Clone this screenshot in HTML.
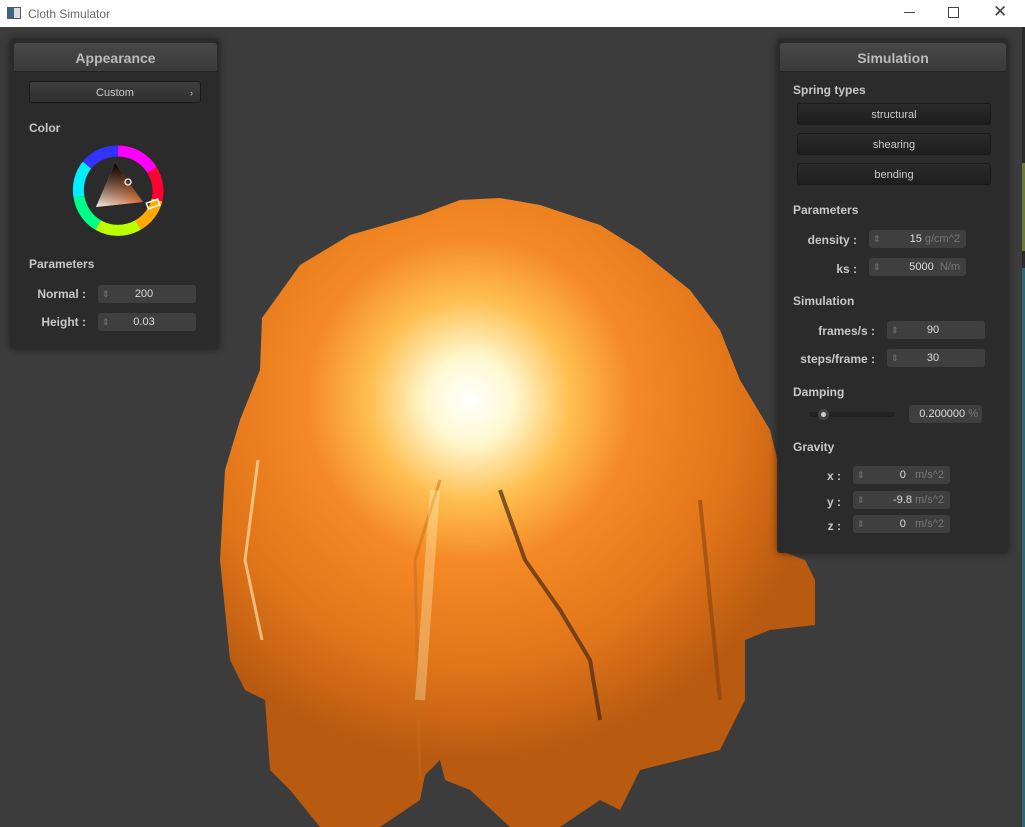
<!DOCTYPE html>
<html><head><style>
*{margin:0;padding:0;box-sizing:border-box}
body{width:1025px;height:827px;background:#3c3c3c;font-family:"Liberation Sans",sans-serif;position:relative;overflow:hidden}
.title{position:absolute;left:0;top:0;width:1025px;height:27px;background:#fff;font-size:12px;color:#666}
.panel{position:absolute;background:rgba(43,43,43,0.96);box-shadow:0 0 8px rgba(0,0,0,.5);border-radius:3px}
.hdr{position:absolute;height:29px;background:linear-gradient(#484848,#3a3a3a);border-bottom:1px solid #222;color:#bbb;font-weight:bold;font-size:14px;text-align:center;line-height:30px;border-radius:3px 3px 0 0}
.lbl{position:absolute;color:#c8c8c8;font-weight:bold;font-size:12px}
.rl{position:absolute;color:#c8c8c8;font-weight:bold;font-size:12px;text-align:right}
.box{position:absolute;height:18px;background:#3f3f3f;border-radius:3px;color:#ddd;font-size:11px;line-height:19px;text-align:right;padding-right:6px}
.box:before{content:"⇕";position:absolute;left:4px;color:#777;font-size:9px}
.u{color:#777}
.btn{position:absolute;height:22px;background:linear-gradient(#2a2a2a,#1e1e1e);border:1px solid #1a1a1a;border-radius:3px;color:#ccc;font-size:11px;text-align:center;line-height:23px}
</style></head><body>
<div class="title">
 <div style="position:absolute;left:7px;top:7px;width:14px;height:12px;border:1px solid #557;background:linear-gradient(90deg,#3a6a7a 50%,#ddd 50%)"></div>
 <div style="position:absolute;left:28px;top:7px">Cloth Simulator</div>
 <div style="position:absolute;left:904px;top:12px;width:11px;height:1px;background:#444"></div>
 <div style="position:absolute;left:948px;top:7px;width:11px;height:11px;border:1px solid #444"></div>
 <div style="position:absolute;left:993px;top:2px;font-size:17px;color:#444">✕</div>
</div>
<div style="position:absolute;left:1022px;top:27px;width:3px;height:800px;background:#2a2a2a"></div>
<div style="position:absolute;left:1022px;top:163px;width:3px;height:88px;background:#6a7a3a"></div>
<div style="position:absolute;left:1022px;top:268px;width:3px;height:559px;background:#2a6a74"></div>

<svg style="position:absolute;left:0;top:0" width="1025" height="827">
<defs>
<radialGradient id="g" cx="470" cy="400" r="360" gradientUnits="userSpaceOnUse">
<stop offset="0" stop-color="#ffffff"/><stop offset="0.12" stop-color="#fff8d0"/><stop offset="0.28" stop-color="#ffbf50"/><stop offset="0.45" stop-color="#f58a25"/><stop offset="0.75" stop-color="#e0741a"/><stop offset="1" stop-color="#b85a10"/></radialGradient>
</defs>
<path fill="url(#g)" d="M262,318 L300,265 L350,235 L420,215 L460,200 L500,198 L540,205 L600,225 L640,250 L690,290 L720,330 L740,380 L770,430 L780,470 L778,550 L805,560 L815,580 L815,625 L770,630 L745,640 L745,700 L720,750 L680,760 L640,770 L620,810 L600,800 L560,827 L510,827 L470,790 L445,780 L440,760 L425,775 L420,800 L380,827 L320,827 L290,790 L270,770 L265,700 L245,690 L230,660 L220,560 L225,470 L240,420 L260,370 Z"/>
<path d="M440,480 L415,560 L420,780" stroke="#c86a1a" stroke-width="3" fill="none" opacity=".5"/>
<path d="M435,490 L420,700" stroke="#fff4c0" stroke-width="10" fill="none" opacity=".35"/>
<path d="M500,490 L525,560 L560,610 L590,660 L600,720" stroke="#4a2a12" stroke-width="4" fill="none" opacity=".7"/>
<path d="M700,500 L710,600 L720,700" stroke="#7a3a10" stroke-width="4" fill="none" opacity=".5"/>
<path d="M258,460 L245,560 L262,640" stroke="#fff0c0" stroke-width="3" fill="none" opacity=".6"/>
</svg>

<div class="panel" style="left:10px;top:39px;width:209px;height:310px">
 <div class="hdr" style="left:4px;top:4px;width:203px">Appearance</div>
 <div class="btn" style="left:19px;top:42px;width:172px;background:linear-gradient(#3e3e3e,#303030)">Custom<span style="position:absolute;right:7px;top:0;font-size:9px">›</span></div>
 <div class="lbl" style="left:19px;top:82px">Color</div>
 <svg style="position:absolute;left:62px;top:106px" width="92" height="92" viewBox="0 0 92 92">
  <defs>
   <linearGradient id="t1" x1="43" y1="18" x2="48" y2="62" gradientUnits="userSpaceOnUse"><stop offset="0" stop-color="#000"/><stop offset="1" stop-color="#000" stop-opacity="0"/></linearGradient>
   <linearGradient id="t2" x1="24" y1="62" x2="62" y2="40" gradientUnits="userSpaceOnUse"><stop offset="0" stop-color="#fff"/><stop offset="1" stop-color="#fff" stop-opacity="0"/></linearGradient>
  </defs>
  <g fill="none" stroke-width="11">
   <path d="M46,6 A40,40 0 0 1 80,25" stroke="#f0f"/>
   <path d="M80,25 A40,40 0 0 1 85,55" stroke="#f03"/>
   <path d="M85,55 A40,40 0 0 1 66,80" stroke="#fa0"/>
   <path d="M66,80 A40,40 0 0 1 26,80" stroke="#bf0"/>
   <path d="M26,80 A40,40 0 0 1 7,52" stroke="#0f8"/>
   <path d="M7,52 A40,40 0 0 1 15,20" stroke="#0ef"/>
   <path d="M15,20 A40,40 0 0 1 46,6" stroke="#33f"/>
  </g>
  <path d="M43,18 L71,57 L24,62 Z" fill="#e07030"/>
  <path d="M43,18 L71,57 L24,62 Z" fill="url(#t2)"/>
  <path d="M43,18 L71,57 L24,62 Z" fill="url(#t1)"/>
  <circle cx="56" cy="37" r="3" fill="none" stroke="#fff" stroke-width="1.3"/>
  <rect x="75" y="56" width="12" height="6" fill="none" stroke="#fff" stroke-width="1.5" transform="rotate(-20 81 59)"/>
 </svg>
 <div class="lbl" style="left:19px;top:218px">Parameters</div>
 <div class="rl" style="left:10px;top:248px;width:66px">Normal :</div>
 <div class="box" style="left:88px;top:246px;width:98px;text-align:center">200</div>
 <div class="rl" style="left:10px;top:276px;width:66px">Height :</div>
 <div class="box" style="left:88px;top:274px;width:98px;text-align:center">0.03</div>
</div>

<div class="panel" style="left:777px;top:39px;width:231px;height:514px">
 <div class="hdr" style="left:3px;top:4px;width:226px">Simulation</div>
 <div class="lbl" style="left:16px;top:44px">Spring types</div>
 <div class="btn" style="left:20px;top:64px;width:194px">structural</div>
 <div class="btn" style="left:20px;top:94px;width:194px">shearing</div>
 <div class="btn" style="left:20px;top:124px;width:194px">bending</div>
 <div class="lbl" style="left:16px;top:164px">Parameters</div>
 <div class="rl" style="left:10px;top:194px;width:70px">density :</div>
 <div class="box" style="left:92px;top:191px;width:97px">15 <span class="u">g/cm^2</span></div>
 <div class="rl" style="left:10px;top:223px;width:70px">ks :</div>
 <div class="box" style="left:92px;top:219px;width:97px">5000 &nbsp;<span class="u">N/m</span></div>
 <div class="lbl" style="left:16px;top:255px">Simulation</div>
 <div class="rl" style="left:10px;top:285px;width:88px">frames/s :</div>
 <div class="box" style="left:110px;top:282px;width:98px;text-align:center">90</div>
 <div class="rl" style="left:10px;top:313px;width:88px">steps/frame :</div>
 <div class="box" style="left:110px;top:310px;width:98px;text-align:center">30</div>
 <div class="lbl" style="left:16px;top:346px">Damping</div>
 <div style="position:absolute;left:32px;top:373px;width:86px;height:5px;background:#222;border-radius:3px"></div>
 <div style="position:absolute;left:41px;top:370px;width:11px;height:11px;border-radius:50%;background:#555;border:3px solid #444"><div style="width:5px;height:5px;background:#ccc;border-radius:50%"></div></div>
 <div style="position:absolute;left:132px;top:366px;width:73px;height:18px;background:#3f3f3f;border-radius:3px;color:#ddd;font-size:11px;line-height:19px;text-align:right;padding-right:4px">0.200000 <span class="u">%</span></div>
 <div class="lbl" style="left:16px;top:401px">Gravity</div>
 <div class="rl" style="left:10px;top:430px;width:54px">x :</div>
 <div class="box" style="left:76px;top:427px;width:97px">0 &nbsp;&nbsp;<span class="u">m/s^2</span></div>
 <div class="rl" style="left:10px;top:456px;width:54px">y :</div>
 <div class="box" style="left:76px;top:452px;width:97px">-9.8 <span class="u">m/s^2</span></div>
 <div class="rl" style="left:10px;top:480px;width:54px">z :</div>
 <div class="box" style="left:76px;top:476px;width:97px">0 &nbsp;&nbsp;<span class="u">m/s^2</span></div>
</div>
</body></html>
